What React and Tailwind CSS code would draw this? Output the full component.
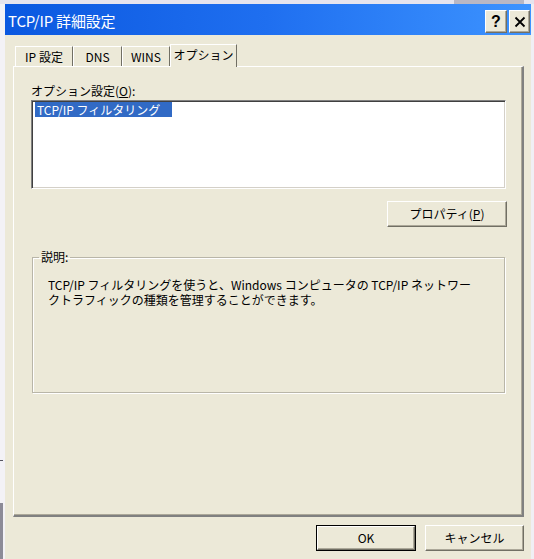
import React from 'react';

const font = { fontFamily: '"Noto Sans CJK JP", "Liberation Sans", sans-serif' };

const bevel =
  'border-t border-l border-t-white border-l-white border-r border-b border-r-[#716f64] border-b-[#716f64] shadow-[inset_-1px_-1px_0_#aca899]';

const Tab = ({ label, active }) => (
  <div
    className={
      'flex items-center justify-center whitespace-nowrap border-t border-l border-r border-t-white border-l-white border-r-[#716f64] text-[12px] text-black bg-[#ece9d8] ' +
      (active ? 'h-[23px] -mb-px relative z-10 pb-[2px]' : 'h-[20px]')
    }
    style={{ width: label.w }}
  >
    {label.text}
  </div>
);

const tabs = [
  { text: 'IP 設定', w: 58 },
  { text: 'DNS', w: 49 },
  { text: 'WINS', w: 48 },
];

const App = () => {
  return (
    <div className="w-[534px] h-[559px] overflow-hidden flex flex-col bg-[#e6e4ee]" style={font}>
      <div className="h-[4px] shrink-0 flex justify-end">
        <div className="w-[70px] h-[4px] bg-[#b9b7c4] mr-[10px]" />
      </div>
      <div className="flex flex-1">
        {/* background window edge */}
        <div className="w-[5px] flex flex-col bg-[#f3f2f6]">
          <div className="h-[456px]" />
          <div className="h-[1px] w-[3px] bg-[#55555f]" />
          <div className="h-[42px]" />
          <div className="flex-1 w-[3px] bg-[#8c8b97]" />
        </div>

        {/* dialog */}
        <div className="w-[526px] flex flex-col bg-[#ece9d8]">
          {/* title bar */}
          <div className="h-[31px] shrink-0 flex items-center bg-gradient-to-r from-[#0a58e0] via-[#1f6ff0] to-[#3d93ff] pl-[3px] pr-[1px]">
            <div className="flex-1 text-white text-[15px] leading-[20px] pt-[2px] tracking-[-0.2px]">
              TCP/IP 詳細設定
            </div>
            <div className="flex gap-[2px] mt-[4px]">
              <div className={'w-[22px] h-[23px] bg-[#ece9d8] flex items-center justify-center ' + bevel}>
                <span className="text-[16px] font-bold leading-none text-black" style={{ fontFamily: '"Liberation Sans", sans-serif' }}>?</span>
              </div>
              <div className={'w-[21px] h-[23px] bg-[#ece9d8] flex items-center justify-center ' + bevel}>
                <svg width="12" height="12" viewBox="0 0 12 12">
                  <path d="M1.5 1.5 L10.5 10.5 M10.5 1.5 L1.5 10.5" stroke="#000" strokeWidth="1.8" />
                </svg>
              </div>
            </div>
          </div>

          {/* body */}
          <div className="flex-1 flex flex-col pl-[8px] pr-[7px] pt-[9px]">
            {/* tabs */}
            <div className="h-[22px] flex items-end pl-[2px]">
              {tabs.map((t) => (
                <Tab key={t.text} label={t} />
              ))}
              <Tab label={{ text: 'オプション', w: 67 }} active />
            </div>

            {/* tab panel */}
            <div className="h-[451px] border-t border-l border-t-white border-l-white border-r-2 border-b-2 border-r-[#808080] border-b-[#808080] shadow-[inset_-1px_-1px_0_#aca899] flex flex-col pl-[17px] pr-[16px] pt-[16px]">
              <div className="text-[12px] leading-[16px] text-black mb-[1px]">
                オプション設定(<span className="underline">O</span>):
              </div>
              <div className="h-[89px] bg-white border-t border-l border-t-[#808080] border-l-[#808080] border-r border-b border-r-white border-b-white shadow-[inset_1px_1px_0_#404040,inset_-1px_-1px_0_#d4d0c8] px-[3px] pt-[1px]">
                <div className="bg-[#316ac5] text-white text-[12px] leading-[15px] px-[2px] w-[137px]">
                  TCP/IP フィルタリング
                </div>
              </div>

              <div className="flex justify-end mt-[12px]">
                <div className={'w-[120px] h-[26px] flex items-center justify-center text-[12px] text-black bg-[#ece9d8] -mr-px ' + bevel}>
                  プロパティ(<span className="underline">P</span>)
                </div>
              </div>

              <fieldset className="mt-[23px] ml-px mr-px h-[143px] border border-[#b9b6a8] shadow-[inset_1px_1px_0_#fff,1px_1px_0_#fff] px-0">
                <legend className="ml-[6px] px-[2px] text-[12px] leading-[14px] text-black">説明:</legend>
                <div className="mt-[13px] pl-[15px] text-[12px] leading-[15px] text-black whitespace-nowrap">
                  <div>TCP/IP フィルタリングを使うと、Windows コンピュータの TCP/IP ネットワー</div>
                  <div>クトラフィックの種類を管理することができます。</div>
                </div>
              </fieldset>
            </div>

            {/* dialog buttons */}
            <div className="flex justify-end gap-[9px] mt-[8px]">
              <div className="w-[100px] h-[26px] border border-black flex">
                <div className={'flex-1 flex items-center justify-center text-[12px] text-black ' + bevel}>OK</div>
              </div>
              <div className={'w-[99px] h-[26px] flex items-center justify-center text-[12px] text-black ' + bevel}>
                キャンセル
              </div>
            </div>
          </div>
        </div>

        <div className="w-[3px] bg-[#f0eff4]" />
      </div>
    </div>
  );
};

export default App;
